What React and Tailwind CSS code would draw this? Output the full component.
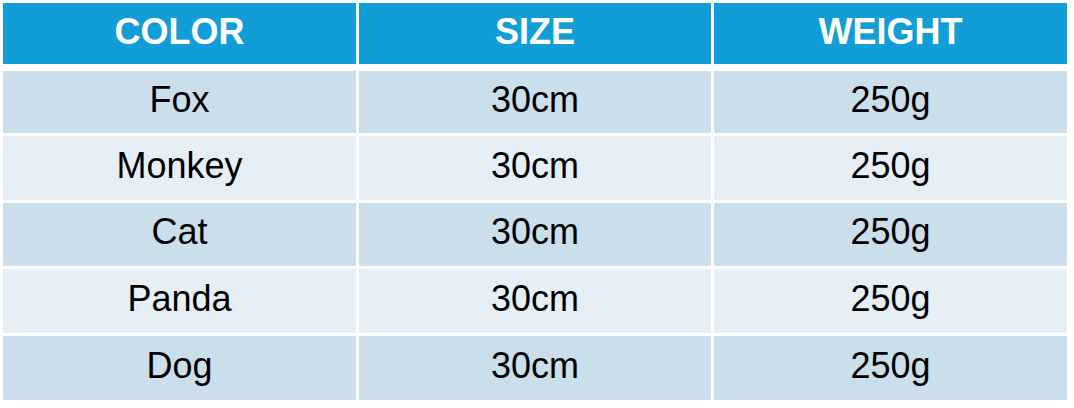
import React from "react";

const rows = [
  { color: "Fox", size: "30cm", weight: "250g", bg: "bg-[#cbdeec]", h: "h-[62px]" },
  { color: "Monkey", size: "30cm", weight: "250g", bg: "bg-[#e6eef6]", h: "h-[64px]" },
  { color: "Cat", size: "30cm", weight: "250g", bg: "bg-[#cbdeec]", h: "h-[63px]" },
  { color: "Panda", size: "30cm", weight: "250g", bg: "bg-[#e6eef6]", h: "h-[64px]" },
  { color: "Dog", size: "30cm", weight: "250g", bg: "bg-[#cbdeec]", h: "h-[64px]" },
];

function App() {
  return (
    <div
      className="bg-white w-[1074px] h-[408px] pt-[3px] pl-[3px]"
      style={{ fontFamily: '"Liberation Sans", Arial, sans-serif' }}
    >
      <div className="grid grid-cols-[353px_352px_353px] gap-x-[3px] h-[61px]">
        {["COLOR", "SIZE", "WEIGHT"].map((t) => (
          <div
            key={t}
            className="bg-[#119ed6] flex items-center justify-center pb-[4px] text-white font-bold text-[36px] leading-none"
          >
            {t}
          </div>
        ))}
      </div>
      <div className="flex flex-col gap-y-[3px] mt-[7px]">
        {rows.map((r) => (
          <div
            key={r.color}
            className={`grid grid-cols-[353px_352px_353px] gap-x-[3px] ${r.h}`}
          >
            {[r.color, r.size, r.weight].map((v, i) => (
              <div
                key={i}
                className={`${r.bg} flex items-center justify-center pb-[5px] text-black text-[36px] leading-none`}
              >
                {v}
              </div>
            ))}
          </div>
        ))}
      </div>
    </div>
  );
}

export default App;
